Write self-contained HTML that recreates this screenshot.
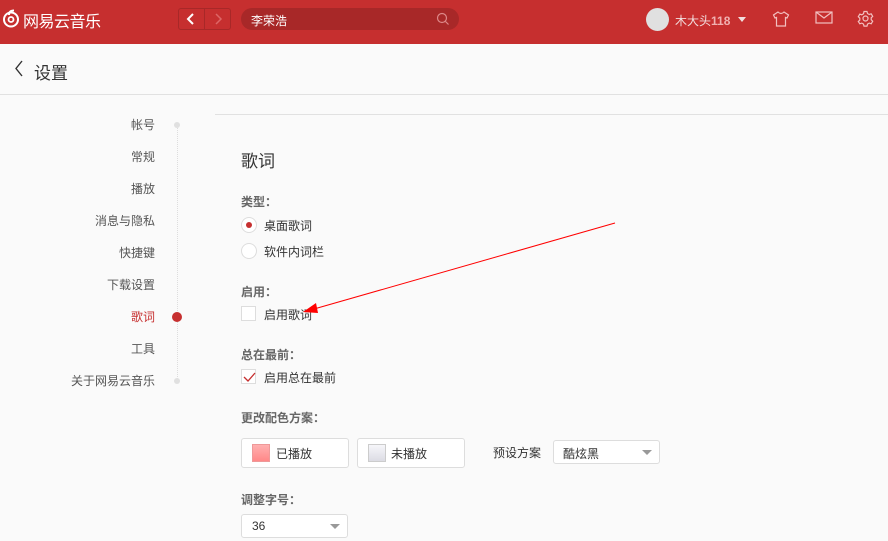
<!DOCTYPE html>
<html><head><meta charset="utf-8"><style>
*{margin:0;padding:0;box-sizing:border-box}
body{width:888px;height:541px;overflow:hidden;background:#fafafa;font-family:"Liberation Sans","Noto Sans CJK SC",sans-serif;font-size:12px;color:#333;position:relative}
.a{position:absolute}
.hdr{left:0;top:0;width:888px;height:44px;background:#c62f2f}
.nav{right:733px;text-align:right;white-space:nowrap;line-height:14px;transform:translateY(-7px);color:#555}
.lbl{font-weight:bold;color:#666;font-size:12px}
.box{width:15px;height:15px;border:1px solid #ddd;background:#fff}
.rad{width:16px;height:16px;border:1px solid #ddd;border-radius:50%;background:#fff}
.btn{height:30px;border:1px solid #ddd;border-radius:3px;background:#fff}
</style></head><body>
<div class="a hdr"></div>
<svg class="a" style="left:1px;top:8px" width="20" height="20" viewBox="0 0 20 20"><circle cx="10" cy="11.5" r="7" fill="none" stroke="#fff" stroke-width="2"/><circle cx="10" cy="11.5" r="2.5" fill="none" stroke="#fff" stroke-width="1.8"/><path d="M13 2.5 Q8 2.5 8 7" stroke="#fff" stroke-width="2" fill="none"/></svg>
<div class="a" style="left:23px;top:8px;color:#fff;font-size:16px;letter-spacing:-0.5px">网易云音乐</div>
<div class="a" style="left:178px;top:8px;width:53px;height:22px;border:1px solid #a82828;border-radius:3px"></div>
<div class="a" style="left:204px;top:8px;width:1px;height:22px;background:#a82828"></div>
<svg class="a" style="left:186px;top:13px" width="10" height="12"><path d="M7 1 L2 6 L7 11" fill="none" stroke="#fff" stroke-width="2"/></svg>
<svg class="a" style="left:213px;top:13px" width="10" height="12"><path d="M3 1 L8 6 L3 11" fill="none" stroke="#d66" stroke-width="1.5"/></svg>
<div class="a" style="left:241px;top:8px;width:218px;height:22px;border-radius:11px;background:#a82828"></div>
<div class="a" style="left:251px;top:12px;color:#fff;font-size:12px">李荣浩</div>
<svg class="a" style="left:436px;top:12px" width="14" height="14"><circle cx="6" cy="6" r="4.5" fill="none" stroke="#d88" stroke-width="1.2"/><path d="M9.5 9.5 L12.5 12.5" stroke="#d88" stroke-width="1.2"/></svg>
<div class="a" style="left:646px;top:8px;width:23px;height:23px;border-radius:50%;background:#e0e0e0"></div>
<div class="a" style="left:675px;top:12px;color:#f2dede;font-size:12px">木大头<b style="color:#f0b0b0">118</b></div>
<div class="a" style="left:738px;top:17px;border:4px solid transparent;border-top:5px solid #f2dede"></div>
<svg class="a" style="left:772px;top:10px" width="18" height="18" viewBox="0 0 18 18" fill="none" stroke="#f2c0c0" stroke-width="1.2"><path d="M6 2 L1.5 5 L3 8 L4.5 7.5 V16 H13.5 V7.5 L15 8 L16.5 5 L12 2 Q9 5 6 2Z"/></svg>
<svg class="a" style="left:815px;top:11px" width="18" height="14" fill="none" stroke="#f2c0c0" stroke-width="1.2"><rect x="1" y="1" width="16" height="11"/><path d="M1 1 L9 7 L17 1"/></svg>
<svg class="a" style="left:857px;top:10px" width="17" height="17" viewBox="0 0 17 17" fill="none" stroke="#f2c0c0" stroke-width="1.2"><circle cx="8.5" cy="8.5" r="2.5"/><path d="M7 1.5h3l.5 2 1.7 1 2-.7 1.5 2.6-1.5 1.4v2l1.5 1.4-1.5 2.6-2-.7-1.7 1-.5 2H7l-.5-2-1.7-1-2 .7L1.3 11.5l1.5-1.4v-2L1.3 6.7 2.8 4.1l2 .7 1.7-1z"/></svg>
<svg class="a" style="left:14px;top:60px" width="10" height="18"><path d="M8 1 L2 8.5 L8 16" fill="none" stroke="#333" stroke-width="1.4"/></svg>
<div class="a" style="left:34px;top:59px;font-size:17px;color:#333">设置</div>
<div class="a" style="left:0;top:94px;width:888px;height:1px;background:#e1e1e1"></div>
<div class="a" style="left:215px;top:114px;width:673px;height:1px;background:#e1e1e1"></div>
<div class="a" style="left:177px;top:125px;height:256px;border-left:1px dotted #ddd"></div>
<div class="a" style="left:174px;top:122px;width:6px;height:6px;border-radius:50%;background:#e0e0e0"></div>
<div class="a" style="left:174px;top:378px;width:6px;height:6px;border-radius:50%;background:#e0e0e0"></div>
<div class="a" style="left:172px;top:312px;width:10px;height:10px;border-radius:50%;background:#c62f2f"></div>
<div class="a nav" style="top:125px">帐号</div>
<div class="a nav" style="top:157px">常规</div>
<div class="a nav" style="top:189px">播放</div>
<div class="a nav" style="top:221px">消息与隐私</div>
<div class="a nav" style="top:253px">快捷键</div>
<div class="a nav" style="top:285px">下载设置</div>
<div class="a nav" style="top:317px;color:#c62f2f">歌词</div>
<div class="a nav" style="top:349px">工具</div>
<div class="a nav" style="top:381px">关于网易云音乐</div>
<div class="a" style="left:241px;top:147px;font-size:17px;color:#333">歌词</div>
<div class="a lbl" style="left:241px;top:193px">类型：</div>
<div class="a rad" style="left:241px;top:217px"></div><div class="a" style="left:246px;top:222px;width:6px;height:6px;border-radius:50%;background:#c62f2f"></div>
<div class="a" style="left:264px;top:217px">桌面歌词</div>
<div class="a rad" style="left:241px;top:243px"></div>
<div class="a" style="left:264px;top:243px">软件内词栏</div>
<div class="a lbl" style="left:241px;top:283px">启用：</div>
<div class="a box" style="left:241px;top:306px"></div>
<div class="a" style="left:264px;top:306px">启用歌词</div>
<div class="a lbl" style="left:241px;top:346px">总在最前：</div>
<div class="a box" style="left:241px;top:369px"></div>
<svg class="a" style="left:242px;top:370px" width="14" height="14"><path d="M2 7 L6 11 L13 3" fill="none" stroke="#c62f2f" stroke-width="1.3"/></svg>
<div class="a" style="left:264px;top:369px">启用总在最前</div>
<div class="a lbl" style="left:241px;top:409px">更改配色方案：</div>
<div class="a btn" style="left:241px;top:438px;width:108px"></div>
<div class="a" style="left:252px;top:444px;width:18px;height:18px;border:1px solid #e99;background:linear-gradient(#ffb0b0,#f88)"></div>
<div class="a" style="left:276px;top:445px">已播放</div>
<div class="a btn" style="left:357px;top:438px;width:108px"></div>
<div class="a" style="left:368px;top:444px;width:18px;height:18px;border:1px solid #ccc;background:linear-gradient(#f6f6fa,#dcdce4)"></div>
<div class="a" style="left:391px;top:445px">未播放</div>
<div class="a" style="left:493px;top:444px">预设方案</div>
<div class="a btn" style="left:553px;top:440px;width:107px;height:24px"></div>
<div class="a" style="left:563px;top:445px">酷炫黑</div>
<div class="a" style="left:642px;top:450px;border:5px solid transparent;border-top:5px solid #999"></div>
<div class="a lbl" style="left:241px;top:491px">调整字号：</div>
<div class="a btn" style="left:241px;top:514px;width:107px;height:24px"></div>
<div class="a" style="left:252px;top:519px;font-size:12px">36</div>
<div class="a" style="left:330px;top:524px;border:5px solid transparent;border-top:5px solid #999"></div>
<svg class="a" style="left:0;top:0" width="888" height="541"><line x1="615" y1="223" x2="314" y2="309" stroke="#f00" stroke-width="1"/><polygon points="303,312 316,303 318,313" fill="#f00"/></svg>
</body></html>
